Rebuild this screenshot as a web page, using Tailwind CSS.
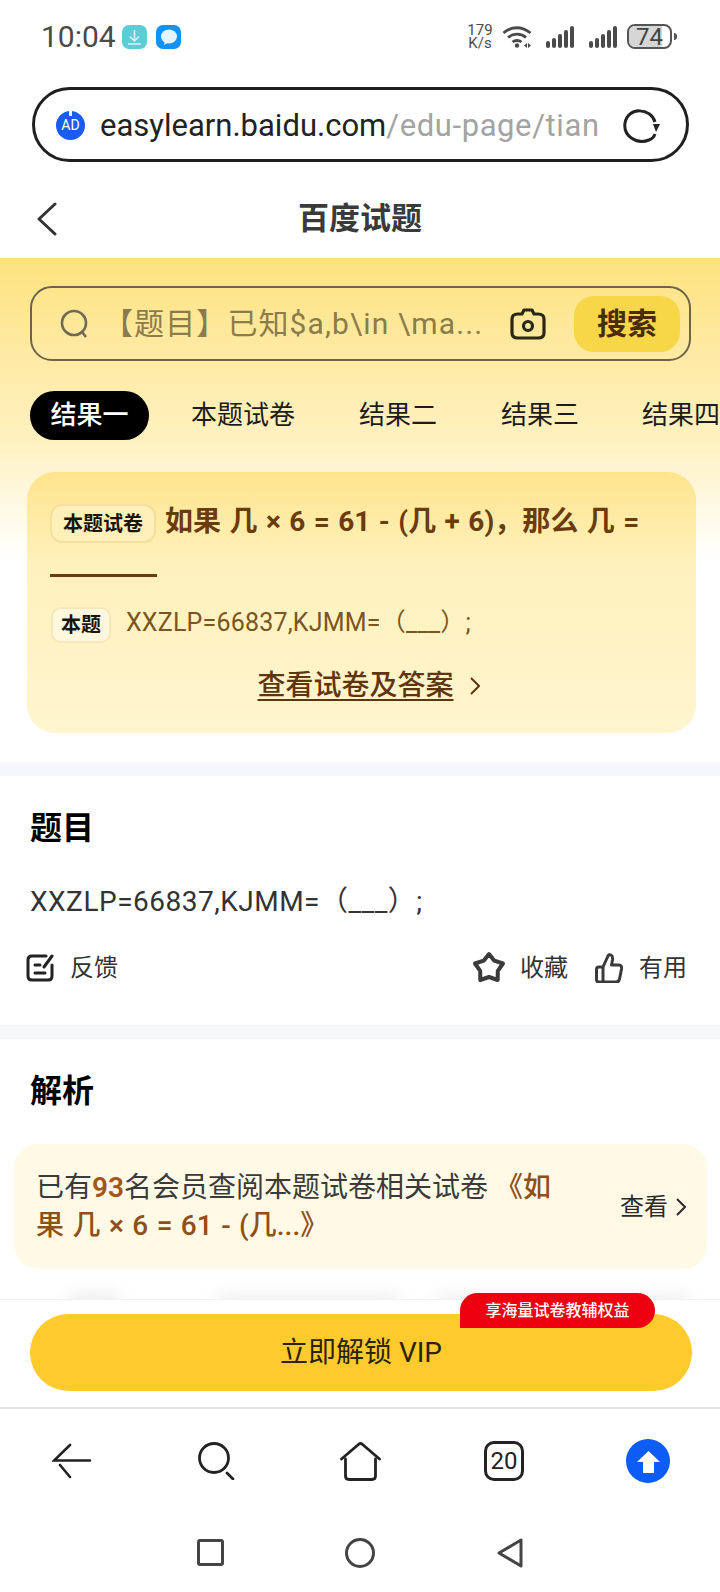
<!DOCTYPE html>
<html lang="zh-CN">
<head>
  <meta charset="UTF-8">
  <meta name="viewport" content="width=device-width, initial-scale=1.0">
  <script src="https://cdn.jsdelivr.net/npm/@tailwindcss/browser@4"></script>
  <title>百度试题</title>
</head>
<body class="bg-white font-['Roboto','Noto_Sans_CJK_SC',sans-serif]">
  <div class="w-[720px] h-[1592px] overflow-hidden flex flex-col">

    <!-- status bar -->
    <div class="h-[73px] shrink-0 flex items-center pl-[41px] pr-[43px] text-[#4a4a4a]">
      <span class="text-[30px] leading-none w-[81px]">10:04</span>
      <svg class="w-[25px] h-[24px]" viewBox="0 0 25 24"><rect width="25" height="24" rx="7" fill="#5ccdd6"/><path d="M12.5 5v11M8 11.500l4.500 4.500 4.500-4.500M6 19h13" fill="none" stroke="#d9f5f5" stroke-width="1.500"/></svg>
      <svg class="w-[25px] h-[24px] ml-[9px]" viewBox="0 0 25 24"><rect width="25" height="24" rx="7" fill="#0f93f5"/><ellipse cx="13" cy="11.500" rx="8" ry="7" fill="#e4f5ff"/><path d="M9 16l-1 4 5-3z" fill="#e4f5ff"/></svg>
      <div class="ml-auto flex items-center">
        <div class="w-[26px] text-[15px] leading-[13px] text-center">179<br>K/s</div>
        <svg class="ml-[9px] w-[30px] h-[23px]" viewBox="0 0 30 23" fill="none" stroke="#4a4a4a" stroke-width="2.800"><path d="M1.500 8C9 1 20 1 28.500 8"/><path d="M6 12.500c5-4.500 13-4.500 18 0"/><path d="M10.500 17c2.500-2 6.500-2 9 0"/><circle cx="15" cy="20.500" r="2.200" fill="#4a4a4a" stroke="none"/><path d="M22 20.500l3-2.500v5zM29 20.500l-3-2.500v5z" fill="#4a4a4a" stroke="none"/></svg>
        <svg class="ml-[14px] w-[28px] h-[22px]" viewBox="0 0 28 22" fill="#4a4a4a"><rect x="0" y="15" width="4" height="7" rx="2"/><rect x="6" y="12" width="4" height="10" rx="2"/><rect x="12" y="8" width="4" height="14" rx="2"/><rect x="18" y="4" width="4" height="18" rx="2"/><rect x="24" y="0" width="4" height="22" rx="2"/></svg>
        <svg class="ml-[15px] w-[28px] h-[22px]" viewBox="0 0 28 22" fill="#4a4a4a"><rect x="0" y="15" width="4" height="7" rx="2"/><rect x="6" y="12" width="4" height="10" rx="2"/><rect x="12" y="8" width="4" height="14" rx="2"/><rect x="18" y="4" width="4" height="18" rx="2"/><rect x="24" y="0" width="4" height="22" rx="2"/></svg>
        <div class="ml-[10px] relative w-[45px] h-[25px] border-2 border-[#555] rounded-[8px] overflow-hidden flex items-center justify-center">
          <div class="absolute left-0 top-0 bottom-0 w-[33px] bg-[#d6d6d6]"></div>
          <span class="relative text-[24px] leading-none text-[#444]">74</span>
        </div>
        <div class="ml-[2px] w-[3px] h-[7px] rounded-r-sm bg-[#555]"></div>
      </div>
    </div>

    <!-- url bar -->
    <div class="shrink-0 pt-[14px] pl-[32px]">
      <div class="w-[657px] h-[75px] border-[3px] border-[#1f1f1f] rounded-full flex items-center pl-[21px] pt-[1px]">
        <div class="relative w-[29px] h-[29px] shrink-0 rounded-full bg-[#1a5cf0] flex items-center justify-center text-white text-[14px] leading-none">AD
          <div class="absolute top-0 left-[13px] w-[3px] h-[5px] bg-white"></div>
        </div>
        <div class="ml-[15px] mt-[2px] w-[500px] shrink-0 text-[31px] leading-[40px] whitespace-nowrap text-[#222]">easylearn.baidu.com<span class="tracking-[0.6px] text-[#a3a3a3]">/edu-page/tian</span></div>
        <svg class="ml-[22px] w-[40px] h-[40px] shrink-0" viewBox="0 0 40 40" fill="none" stroke="#222" stroke-width="3"><path d="M33 17C29 3 6 1 3 18c-2 13 12 22 24 17 3-1 5-3 6-6"/><path d="M31 19l3 8 4-8z" fill="#222" stroke="none"/></svg>
      </div>
    </div>

    <!-- page title -->
    <div class="h-[96px] shrink-0 relative flex items-center justify-center pt-[16px]">
      <svg class="absolute left-[36px] top-[40px] w-[22px] h-[34px]" viewBox="0 0 22 34" fill="none" stroke="#333" stroke-width="3" stroke-linecap="round" stroke-linejoin="round"><path d="M19 2L3 17l16 15"/></svg>
      <span class="text-[31px] leading-none font-bold text-[#3a3a3a]">百度试题</span>
    </div>

    <!-- yellow top -->
    <div class="h-[504px] shrink-0 bg-linear-to-b from-[#fee27f] via-[#fff1c0] via-[36%] to-white to-[60%] pt-[28px]">
      <div class="ml-[30px] w-[661px] h-[75px] border-2 border-[#6e6348] rounded-[22px] flex items-center pl-[28px]">
        <svg class="w-[28px] h-[30px] shrink-0" viewBox="0 0 28 30" fill="none" stroke="#6f6a55" stroke-width="2.600"><circle cx="14" cy="14" r="12"/><path d="M22 23l4 5"/></svg>
        <span class="ml-[15px] w-[379px] shrink-0 text-[30px] leading-[40px] tracking-[1.1px] whitespace-nowrap text-[#8a7b4b]">【题目】已知$a,b\in \ma...</span>
        <svg class="ml-[28px] w-[36px] h-[32px] shrink-0" viewBox="0 0 36 32" fill="none" stroke="#2b2718" stroke-width="3.200" stroke-linejoin="round"><path d="M8 6h4l2-4h8l2 4h4q6 0 6 5v14q0 5-6 5H8q-6 0-6-5V11q0-5 6-5z"/><circle cx="18" cy="18" r="4.500"/></svg>
        <div class="ml-[28px] w-[106px] h-[56px] shrink-0 rounded-[20px] bg-[#f7d648] flex items-center justify-center text-[30px] font-bold text-[#4a2c0a]">搜索</div>
      </div>
      <div class="mt-[30px] flex items-center h-[49px] overflow-hidden whitespace-nowrap text-[26px] text-[#1c1c1c]">
        <div class="ml-[30px] mr-[10px] w-[119px] h-[49px] shrink-0 rounded-full bg-black text-white font-medium flex items-center justify-center">结果一</div>
        <div class="px-[32px] shrink-0">本题试卷</div>
        <div class="px-[32px] shrink-0">结果二</div>
        <div class="px-[32px] shrink-0">结果三</div>
        <div class="pl-[31px] shrink-0">结果四</div>
      </div>
      <!-- exam card -->
      <div class="mt-[32px] ml-[27px] w-[669px] h-[261px] rounded-[28px] bg-linear-to-b from-[#ffe48c] via-[#fff1bc] via-[35%] to-[#fff5cf] pt-[32px] pl-[23px]">
        <div class="flex items-center h-[39px] whitespace-nowrap">
          <div class="w-[106px] h-[39px] shrink-0 rounded-[12px] border-2 border-[#f3dfa0] bg-[#ffefb8] flex items-center justify-center text-[20px] font-bold text-[#1c1408]">本题试卷</div>
          <span class="ml-[9px] -mt-[3px] text-[28px] leading-none font-bold [word-spacing:1.5px] text-[#6b3b10]">如果 几 × 6 = 61 - (几 + 6)，那么 几 =</span>
        </div>
        <div class="mt-[31px] w-[107px] h-[3px] bg-[#6b3b10]"></div>
        <div class="mt-[30px] ml-[1px] flex items-center h-[36px] whitespace-nowrap">
          <div class="w-[60px] h-[36px] shrink-0 rounded-[10px] border-2 border-[#f5e7b8] bg-[#fff7de] flex items-center justify-center text-[20px] font-bold text-[#1c1408]">本题</div>
          <span class="ml-[15px] -mt-[5px] text-[25px] leading-none tracking-[0.2px] text-[#7a5520]">XXZLP=66837,KJMM=（___）;</span>
        </div>
        <div class="mt-[24px] flex items-center justify-center pr-[9px]">
          <span class="text-[28px] leading-[38px] font-medium text-[#5f3510] underline decoration-2 underline-offset-[4px]">查看试卷及答案</span>
          <svg class="ml-[16px] w-[10px] h-[20px]" viewBox="0 0 10 20" fill="none" stroke="#5f3510" stroke-width="2"><path d="M1 2l8 8-8 8"/></svg>
        </div>
      </div>
    </div>

    <div class="h-[14px] shrink-0 bg-[#f5f7fa]"></div>

    <!-- question -->
    <div class="h-[249px] shrink-0 pt-[30px] pl-[30px]">
      <div class="text-[32px] leading-[44px] font-bold text-black">题目</div>
      <div class="mt-[32px] text-[28px] leading-[40px] tracking-[0.5px] text-[#333] whitespace-nowrap">XXZLP=66837,KJMM=（___）;</div>
      <div class="mt-[29px] -ml-[4px] pr-[33px] h-[34px] flex items-center text-[24px] text-[#333]">
        <svg class="w-[28px] h-[28px]" viewBox="0 0 28 28" fill="none" stroke="#222" stroke-width="3" stroke-linecap="round"><path d="M20 2H6Q2 2 2 6v16q0 4 4 4h16q4 0 4-4V11"/><path d="M26 2l-8 11M9 11h5M9 19h10"/></svg>
        <span class="ml-[16px]">反馈</span>
        <svg class="ml-auto w-[34px] h-[34px]" viewBox="0 0 34 34" fill="none" stroke="#3a3a3a" stroke-width="4" stroke-linejoin="round"><path d="M17 3L22.300 9.700 31 12.500 25.800 19.800 25.700 29 17 26 8.300 29 8.200 19.800 3 12.500 11.700 9.700z"/></svg>
        <span class="ml-[14px]">收藏</span>
        <svg class="ml-[27px] w-[28px] h-[30px]" viewBox="0 0 28 30" fill="none" stroke="#3a3a3a" stroke-width="3" stroke-linejoin="round"><path d="M8 14L13 3q1-2 3-1 2 1 1.500 5l-1 5H24q3 0 2.500 4l-2 10q-.5 3-3.500 3H4q-2.500 0-2.500-2.500V16.500Q1.500 14 4 14h4v15"/></svg>
        <span class="ml-[16px]">有用</span>
      </div>
    </div>

    <div class="h-[14px] shrink-0 bg-[#f5f7fa]"></div>

    <!-- analysis -->
    <div class="h-[260px] shrink-0 pt-[30px]">
      <div class="pl-[30px] text-[32px] leading-[44px] font-bold text-black">解析</div>
      <div class="mt-[31px] ml-[14px] w-[693px] h-[125px] rounded-[24px] bg-[#fff9e6] flex items-center pl-[22px] pr-[21px]">
        <div class="w-[530px] text-[28px] leading-[38px] text-[#3a3a3a]">已有<span class="font-semibold text-[#a0561c]">93</span>名会员查阅本题试卷相关试卷 <span class="font-medium text-[#8f4f17]">《如</span><span class="font-medium [word-spacing:1.5px] text-[#8f4f17]">果 几 × 6 = 61 - (几...》</span></div>
        <span class="ml-auto text-[24px] text-[#2b2b2b]">查看</span>
        <svg class="ml-[8px] w-[10px] h-[18px]" viewBox="0 0 10 18" fill="none" stroke="#2b2b2b" stroke-width="2"><path d="M1 1l8 8-8 8"/></svg>
      </div>
      <div class="mt-[11px] h-[19px] flex overflow-hidden">
        <div class="ml-[69px] mt-[14px] w-[50px] h-[20px] bg-[#ececec] blur-[8px]"></div>
        <div class="ml-[97px] mt-[14px] w-[184px] h-[20px] bg-[#f0f0f0] blur-[8px]"></div>
        <div class="ml-[36px] mt-[14px] w-[253px] h-[20px] bg-[#f0f0f0] blur-[8px]"></div>
      </div>
    </div>

    <!-- vip button -->
    <div class="h-[108px] shrink-0 border-t border-[#f2f2f2] pt-[14px] pl-[30px]">
      <div class="relative w-[662px] h-[77px] rounded-full bg-[#ffca2c] flex items-center justify-center text-[28px] text-[#2b2310]">立即解锁 VIP
        <div class="absolute left-[430px] -top-[21px] w-[195px] h-[35px] rounded-tl-[18px] rounded-tr-[18px] rounded-br-[18px] bg-[#ee0011] flex items-center justify-center text-[16px] font-medium text-white">享海量试卷教辅权益</div>
      </div>
    </div>

    <div class="h-[2px] shrink-0 bg-[#e4e4e4]"></div>

    <!-- browser nav -->
    <div class="h-[104px] shrink-0 grid grid-cols-5 justify-items-center items-center">
      <svg class="w-[40px] h-[36px]" viewBox="0 0 40 36" fill="none" stroke="#222" stroke-width="2.600" stroke-linecap="round"><path d="M18 2L2 17.500h36M8 22l10 12"/></svg>
      <svg class="w-[37px] h-[38px]" viewBox="0 0 37 38" fill="none" stroke="#222" stroke-width="2.800" stroke-linecap="round"><circle cx="16" cy="16" r="14.500"/><path d="M29 31l6 6"/></svg>
      <svg class="w-[41px] h-[39px]" viewBox="0 0 41 39" fill="none" stroke="#222" stroke-width="2.800" stroke-linecap="round" stroke-linejoin="round"><path d="M1.500 17L19 2q1.500-1 3 0l17.500 15"/><path d="M5.500 17v17q0 3.500 3.500 3.500h23q3.500 0 3.500-3.500V17"/></svg>
      <div class="w-[40px] h-[40px] border-[3px] border-[#222] rounded-[10px] flex items-center justify-center text-[24px] leading-none text-[#222]">20</div>
      <svg class="w-[44px] h-[44px]" viewBox="0 0 44 44"><circle cx="22" cy="22" r="22" fill="#0d5cf6"/><path d="M22.500 12L34 23h-6v11H17V23h-6z" fill="#fff"/></svg>
    </div>

    <!-- system nav -->
    <div class="w-[450px] mx-auto h-[79px] shrink-0 grid grid-cols-3 justify-items-center items-center">
      <div class="w-[27px] h-[27px] border-[3px] border-[#444] rounded-[3px]"></div>
      <div class="w-[30px] h-[30px] border-[3px] border-[#444] rounded-full"></div>
      <svg class="w-[26px] h-[30px]" viewBox="0 0 26 30" fill="none" stroke="#444" stroke-width="3" stroke-linejoin="round"><path d="M24 2v26L2 15z"/></svg>
    </div>
  </div>
</body>
</html>
